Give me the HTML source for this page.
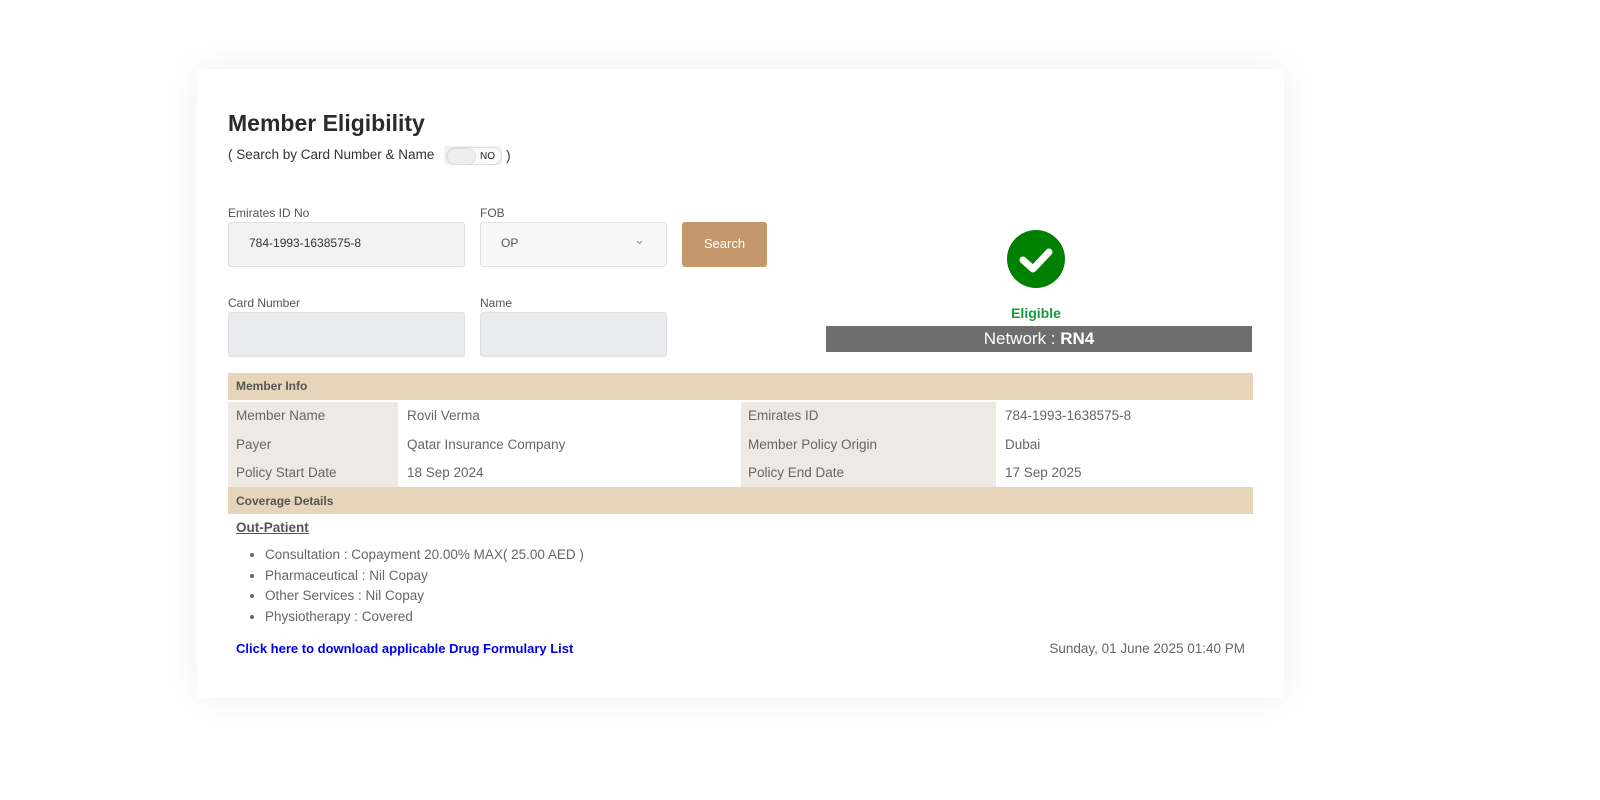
<!DOCTYPE html>
<html><head><style>
body{margin:0;width:1600px;height:800px;background:#fff;font-family:"Liberation Sans",sans-serif;position:relative;overflow:hidden}
.card{position:absolute;left:197px;top:69px;width:1087px;height:629px;background:#fff;box-shadow:0 0 30px rgba(0,0,0,0.07)}
.a{position:absolute}
h1{position:absolute;left:228px;top:110px;margin:0;font-size:23px;font-weight:bold;color:#2b2b2b}
.lbl{font-size:12px;color:#555}
.inp{border:1px solid #e0e0e0;border-radius:3px}
.t{color:#666;font-size:13.5px}
</style></head><body>
<div class="card"></div>
<h1>Member Eligibility</h1>
<div class="a" style="left:228px;top:147px;font-size:13.5px;color:#333">( Search by Card Number &amp; Name</div>
<div class="a" style="left:444px;top:146px;width:58px;height:19px;background:#f2f2f2;border-radius:3px"></div>
<div class="a" style="left:446px;top:147px;width:54px;height:16px;border:1px solid #ddd;border-radius:9px;background:#fafafa"></div>
<div class="a" style="left:447px;top:148px;width:27px;height:15px;border:1px solid #ddd;border-radius:8px;background:#eee"></div>
<div class="a" style="left:480px;top:151px;font-size:10px;color:#222">NO</div>
<div class="a" style="left:506px;top:147px;font-size:14px;color:#333">)</div>

<div class="a lbl" style="left:228px;top:206px">Emirates ID No</div>
<div class="a inp" style="left:228px;top:222px;width:235px;height:43px;background:#f2f2f2"></div>
<div class="a" style="left:249px;top:236px;font-size:12px;color:#333">784-1993-1638575-8</div>
<div class="a lbl" style="left:480px;top:206px">FOB</div>
<div class="a inp" style="left:480px;top:222px;width:185px;height:43px;background:#f8f8f8"></div>
<div class="a" style="left:501px;top:236px;font-size:12px;color:#555">OP</div>
<svg class="a" style="left:636px;top:240px" width="7" height="5" viewBox="0 0 7 5"><path d="M1 1 L3.5 3.5 L6 1" stroke="#999" stroke-width="1.2" fill="none"/></svg>
<div class="a" style="left:682px;top:222px;width:85px;height:45px;background:#c4976a;border-radius:3px;color:#fff;font-size:13px;text-align:center;line-height:43px">Search</div>

<div class="a lbl" style="left:228px;top:296px">Card Number</div>
<div class="a inp" style="left:228px;top:312px;width:235px;height:43px;background:#e8eaed"></div>
<div class="a lbl" style="left:480px;top:296px">Name</div>
<div class="a inp" style="left:480px;top:312px;width:185px;height:43px;background:#e8eaed"></div>

<svg class="a" style="left:1006px;top:229px" width="60" height="60" viewBox="0 0 60 60"><circle cx="30" cy="30" r="29" fill="#008000"/><path d="M17 31 L27 40 L43 23" stroke="#fff" stroke-width="7" fill="none" stroke-linecap="round" stroke-linejoin="round"/></svg>
<div class="a" style="left:826px;top:305px;width:420px;text-align:center;color:#1a9a3a;font-weight:bold;font-size:14px">Eligible</div>
<div class="a" style="left:826px;top:326px;width:426px;height:26px;background:#6e6e6e;color:#fff;font-size:17px;text-align:center;line-height:26px">Network : <b>RN4</b></div>

<div class="a" style="left:228px;top:373px;width:1025px;height:27px;background:#e6d5bb"></div>
<div class="a" style="left:236px;top:379px;font-size:12px;font-weight:bold;color:#555">Member Info</div>
<div class="a" style="left:228px;top:402px;width:170px;height:85px;background:#eeeae3"></div>
<div class="a" style="left:741px;top:402px;width:255px;height:85px;background:#eeeae3"></div>
<div class="a t" style="left:236px;top:408px">Member Name</div>
<div class="a t" style="left:236px;top:437px">Payer</div>
<div class="a t" style="left:236px;top:465px">Policy Start Date</div>
<div class="a t" style="left:407px;top:408px">Rovil Verma</div>
<div class="a t" style="left:407px;top:437px">Qatar Insurance Company</div>
<div class="a t" style="left:407px;top:465px">18 Sep 2024</div>
<div class="a t" style="left:748px;top:408px">Emirates ID</div>
<div class="a t" style="left:748px;top:437px">Member Policy Origin</div>
<div class="a t" style="left:748px;top:465px">Policy End Date</div>
<div class="a t" style="left:1005px;top:408px">784-1993-1638575-8</div>
<div class="a t" style="left:1005px;top:437px">Dubai</div>
<div class="a t" style="left:1005px;top:465px">17 Sep 2025</div>
<div class="a" style="left:228px;top:487px;width:1025px;height:27px;background:#e6d5bb"></div>
<div class="a" style="left:236px;top:494px;font-size:12px;font-weight:bold;color:#555">Coverage Details</div>
<div class="a" style="left:236px;top:520px;font-size:13.5px;font-weight:bold;color:#555;text-decoration:underline">Out-Patient</div>
<ul class="a t" style="left:225px;top:545px;margin:0;padding-left:40px;line-height:20.7px">
<li>Consultation : Copayment 20.00% MAX( 25.00 AED )</li>
<li>Pharmaceutical : Nil Copay</li>
<li>Other Services : Nil Copay</li>
<li>Physiotherapy : Covered</li>
</ul>
<div class="a" style="left:236px;top:641px;font-size:13px;font-weight:bold;color:#0000ee">Click here to download applicable Drug Formulary List</div>
<div class="a t" style="right:355px;top:641px">Sunday, 01 June 2025 01:40 PM</div>
</body></html>
